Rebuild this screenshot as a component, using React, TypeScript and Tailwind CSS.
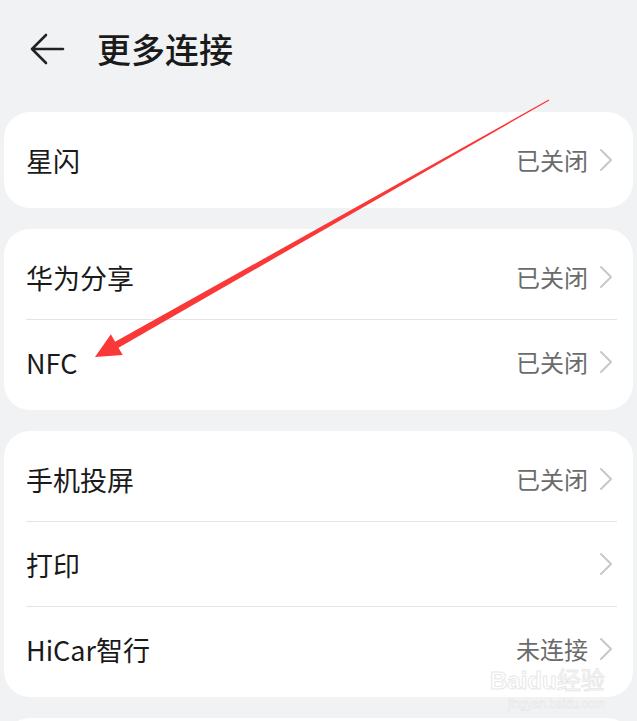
type Row = { label: string; value?: string };

const groups: Row[][] = [
  [{ label: '星闪', value: '已关闭' }],
  [
    { label: '华为分享', value: '已关闭' },
    { label: 'NFC', value: '已关闭' },
  ],
  [
    { label: '手机投屏', value: '已关闭' },
    { label: '打印' },
    { label: 'HiCar智行', value: '未连接' },
  ],
];

const font = { fontFamily: '"Noto Sans CJK SC", "Noto Sans", sans-serif' };

const Chevron = () => (
  <svg width="14" height="24" viewBox="0 0 14 24" fill="none">
    <path d="M2 2L12 12L2 22" stroke="#c8c8c8" strokeWidth="2" strokeLinecap="round" strokeLinejoin="round" />
  </svg>
);

const SettingRow = ({ row }: { row: Row }) => (
  <div className="h-[84px] flex items-center justify-between pl-[22px] pr-[20px]">
    <span className="text-[27px] text-[#1a1a1a] leading-none">{row.label}</span>
    <div className="flex items-center gap-[11px]">
      {row.value && (
        <span className="text-[24px] text-[#6b6b6b] leading-none">{row.value}</span>
      )}
      <Chevron />
    </div>
  </div>
);

const App = () => {
  return (
    <div className="relative w-[637px] h-[721px] overflow-hidden bg-[#f1f2f4]" style={font}>
      {/* Header */}
      <div className="h-[98px] flex items-center pl-[29px]">
        <svg width="36" height="34" viewBox="0 0 36 34" fill="none">
          <path
            d="M34 17H3M17 3L3 17L17 31"
            stroke="#222"
            strokeWidth="2.6"
            strokeLinecap="round"
            strokeLinejoin="round"
          />
        </svg>
        <h1 className="ml-[32px] text-[34px] font-medium text-[#1a1a1a] leading-none">更多连接</h1>
      </div>

      {/* Groups */}
      <div className="mt-[14px] px-[4px] flex flex-col gap-[21px]">
        {groups.map((g, gi) => (
          <div key={gi} className="bg-white rounded-[26px] py-[6px]">
            {g.map((row, ri) => (
              <div key={row.label}>
                {ri > 0 && <div className="ml-[22px] mr-[16px] h-px bg-[#e4e4e4]" />}
                <SettingRow row={row} />
              </div>
            ))}
          </div>
        ))}
        <div className="bg-white rounded-[26px] h-[60px]" />
      </div>

      {/* Annotation arrow */}
      <svg className="absolute left-0 top-0 pointer-events-none" width="637" height="721">
        <polygon
          points="95,357 110.9,334.3 115.1,341.7 548.7,99.6 549.3,100.4 118.5,347.7 122.7,355.1"
          fill="#fb3838"
        />
      </svg>

      {/* Watermark */}
      <div className="absolute left-[490px] top-[667px] flex flex-col items-end pointer-events-none">
        <span
          className="text-[24px] leading-none font-bold text-white/80"
          style={{ WebkitTextStroke: '1px #e8e8e8', fontFamily: '"Liberation Sans", sans-serif' }}
        >
          Baidu<span style={font} className="font-normal">经验</span>
        </span>
        <span
          className="mt-[5px] text-[12px] leading-none text-white"
          style={{ WebkitTextStroke: '0.5px #e4e4e4', fontFamily: '"Liberation Sans", sans-serif' }}
        >
          jingyan.baidu.com
        </span>
      </div>
    </div>
  );
};

export default App;
